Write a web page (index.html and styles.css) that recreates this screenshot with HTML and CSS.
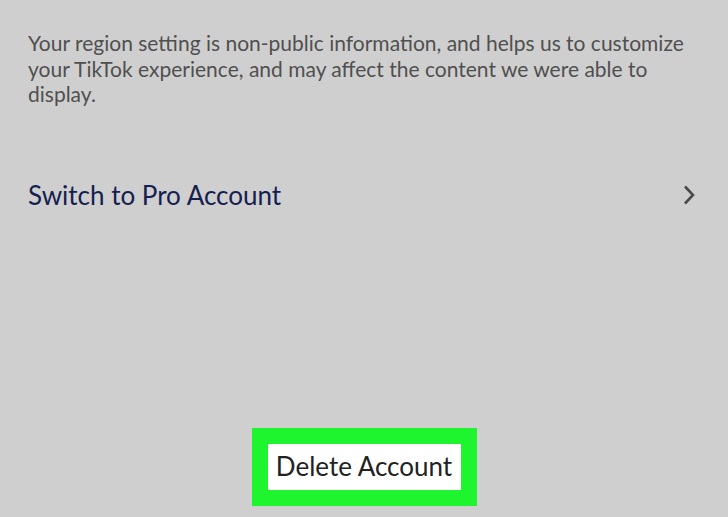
FILE: index.html
```html
<!DOCTYPE html>
<html>
<head>
<meta charset="utf-8">
<link rel="stylesheet" href="styles.css">
</head>
<body>
<div class="page">
  <p class="note">Your region setting is non-public information, and helps us to customize your TikTok experience, and may affect the content we were able to display.</p>
  <div class="row">
    <span class="row-label">Switch to Pro Account</span>
    <svg class="chev" width="14" height="20" viewBox="0 0 14 20"><path d="M3 1.5 L11 10 L3 18.5" fill="none" stroke="#4a4a4a" stroke-width="2.6"/></svg>
  </div>
  <div class="spacer"></div>
  <div class="footer">
    <div class="highlight"><div class="btn">Delete Account</div></div>
  </div>
</div>
</body>
</html>
```
FILE: styles.css
```css
html, body { margin: 0; padding: 0; }
body { background: #cfcfcf; font-family: Lato, "Open Sans", sans-serif; }
.page { width: 728px; height: 517px; display: flex; flex-direction: column; }
.note { margin: 30px 0 0 28px; width: 672px; font-size: 21px; line-height: 25.5px; color: #505050; }
.row { display: flex; align-items: center; justify-content: space-between; margin-top: 70px; padding: 0 32px 0 28px; height: 36px; }
.row-label { font-size: 26px; color: #14214f; }
.chev { display: block; }
.spacer { flex: 1; }
.footer { display: flex; justify-content: center; padding-bottom: 11px; }
.highlight { background: #1ef52e; padding: 16px; }
.btn { background: #fff; width: 193px; height: 46px; display: flex; align-items: center; justify-content: center; padding-bottom: 3px; box-sizing: border-box; font-size: 26px; color: #222; }
```
